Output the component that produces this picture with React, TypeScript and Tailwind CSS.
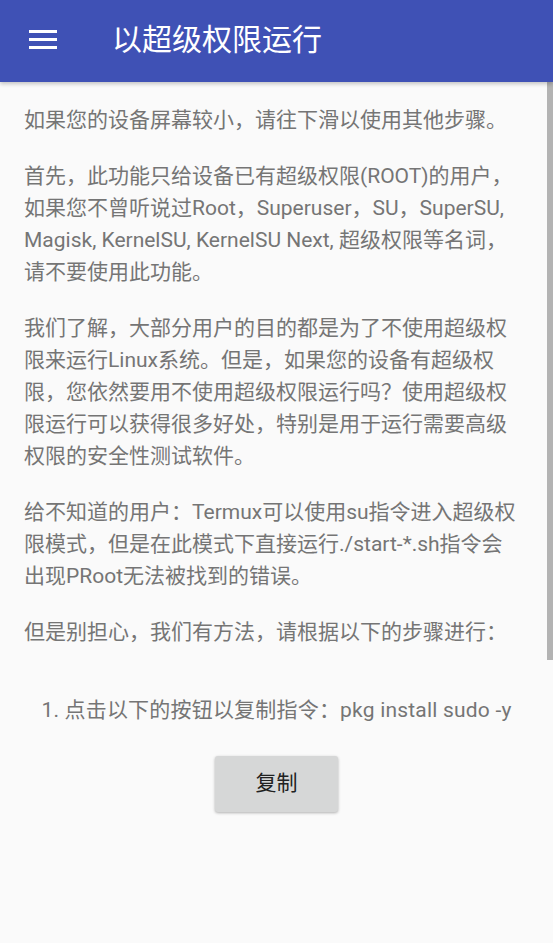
import React from "react";

const font = {
  fontFamily: "Roboto, 'Noto Sans CJK SC', 'Noto Sans', sans-serif",
};

function Para({ lines, first }: { lines: string[]; first?: boolean }) {
  return (
    <div className={first ? "" : "mt-[24px]"}>
      {lines.map((l, i) => (
        <div key={i} className="whitespace-nowrap h-[32px] leading-[32px]">
          {l}
        </div>
      ))}
    </div>
  );
}

export default function App() {
  return (
    <div
      className="relative min-h-[943px] w-full bg-[#fafafa] overflow-hidden"
      style={font}
    >
      <header className="relative z-10 h-[82px] bg-[#3f51b5] flex items-center pb-[3px] shadow-[0_2px_4px_rgba(0,0,0,0.22)]">
        <div className="ml-[29px] w-[28px] flex flex-col gap-[5px]">
          <div className="h-[3px] bg-white" />
          <div className="h-[3px] bg-white" />
          <div className="h-[3px] bg-white" />
        </div>
        <div className="ml-[55px] text-white text-[30px] leading-[38px]">
          以超级权限运行
        </div>
      </header>

      <main className="px-[24px] pt-[22px] text-[21px] text-[#757575]">
        <Para first lines={["如果您的设备屏幕较小，请往下滑以使用其他步骤。"]} />
        <Para
          lines={[
            "首先，此功能只给设备已有超级权限(ROOT)的用户，",
            "如果您不曾听说过Root，Superuser，SU，SuperSU,",
            "Magisk, KernelSU, KernelSU Next, 超级权限等名词，",
            "请不要使用此功能。",
          ]}
        />
        <Para
          lines={[
            "我们了解，大部分用户的目的都是为了不使用超级权",
            "限来运行Linux系统。但是，如果您的设备有超级权",
            "限，您依然要用不使用超级权限运行吗？使用超级权",
            "限运行可以获得很多好处，特别是用于运行需要高级",
            "权限的安全性测试软件。",
          ]}
        />
        <Para
          lines={[
            "给不知道的用户：Termux可以使用su指令进入超级权",
            "限模式，但是在此模式下直接运行./start-*.sh指令会",
            "出现PRoot无法被找到的错误。",
          ]}
        />
        <Para lines={["但是别担心，我们有方法，请根据以下的步骤进行："]} />

        <div className="flex flex-col items-center mt-[46px]">
          <div className="whitespace-nowrap h-[32px] leading-[32px] tracking-[0.2px]">
            1. 点击以下的按钮以复制指令：pkg install sudo -y
          </div>
          <button className="mt-[30px] w-[123px] h-[56px] bg-[#d6d7d7] rounded-[3px] text-[#212121] text-[21px] shadow-[0_1px_3px_rgba(0,0,0,0.3)]">
            复制
          </button>
        </div>
      </main>

      <div className="absolute right-0 top-[82px] w-[6px] h-[578px] bg-[#b3b3b3]" />
    </div>
  );
}
